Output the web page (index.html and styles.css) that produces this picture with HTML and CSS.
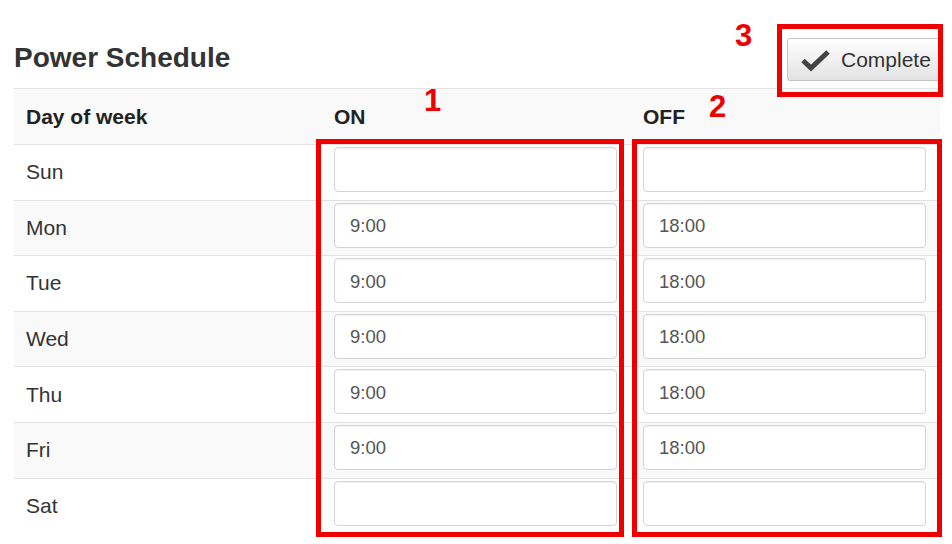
FILE: index.html
```html
<!DOCTYPE html>
<html>
<head>
<meta charset="utf-8">
<link rel="stylesheet" href="styles.css">
</head>
<body>
<div class="page">
  <div class="topbar">
    <h1 class="title">Power Schedule</h1>
    <button class="btn-complete" type="button">
      <svg class="check" width="32" height="24" viewBox="0 0 32 24"><path d="M3 12.5 L11 20 L28 4" fill="none" stroke="#444" stroke-width="5" stroke-linejoin="miter"/></svg>
      <span>Complete</span>
    </button>
  </div>
  <table class="schedule">
    <thead>
      <tr><th class="c-day">Day of week</th><th class="c-on">ON</th><th class="c-off">OFF</th></tr>
    </thead>
    <tbody>
      <tr><td>Sun</td><td><input class="time" value=""></td><td><input class="time" value=""></td></tr>
      <tr><td>Mon</td><td><input class="time" value="9:00"></td><td><input class="time" value="18:00"></td></tr>
      <tr><td>Tue</td><td><input class="time" value="9:00"></td><td><input class="time" value="18:00"></td></tr>
      <tr><td>Wed</td><td><input class="time" value="9:00"></td><td><input class="time" value="18:00"></td></tr>
      <tr><td>Thu</td><td><input class="time" value="9:00"></td><td><input class="time" value="18:00"></td></tr>
      <tr><td>Fri</td><td><input class="time" value="9:00"></td><td><input class="time" value="18:00"></td></tr>
      <tr><td>Sat</td><td><input class="time" value=""></td><td><input class="time" value=""></td></tr>
    </tbody>
  </table>

  <div class="mark box1"></div>
  <div class="mark box2"></div>
  <div class="mark box3"></div>
  <div class="num n1">1</div>
  <div class="num n2">2</div>
  <div class="num n3">3</div>
</div>
</body>
</html>
```

FILE: styles.css
```css
html, body {
  margin: 0;
  padding: 0;
  background: #fff;
}
body {
  font-family: "Liberation Sans", Arial, sans-serif;
  color: #333;
  width: 952px;
  height: 544px;
  overflow: hidden;
}
.page {
  position: relative;
  padding: 0 12px 0 14px;
}
.topbar {
  height: 88px;
  display: flex;
  align-items: flex-start;
  justify-content: space-between;
}
.title {
  margin: 42px 0 0 0;
  font-size: 28px;
  font-weight: bold;
  line-height: 32px;
  color: #333;
}
.btn-complete {
  margin-top: 38px;
  width: 153px;
  height: 43px;
  display: flex;
  align-items: center;
  padding: 0 0 0 12px;
  gap: 9px;
  border: 1px solid #c4c4c4;
  border-radius: 3px;
  background: linear-gradient(#ffffff, #e2e2e2);
  font-family: "Liberation Sans", Arial, sans-serif;
  font-size: 21px;
  color: #333;
  white-space: nowrap;
  overflow: hidden;
}
.check { display: block; flex: none; }
.schedule {
  width: 926px;
  border-collapse: collapse;
  table-layout: fixed;
  border-top: 1px solid #e2e2e2;
}
.schedule th, .schedule td {
  text-align: left;
  padding: 0 14px 0 12px;
  border-bottom: 1px solid #e2e2e2;
}
.schedule th {
  height: 55px;
  font-size: 21px;
  font-weight: bold;
  color: #222;
  background: #f9f9f9;
  vertical-align: middle;
}
.c-day { width: 282px; }
.c-on { width: 283px; }
.schedule td {
  height: 55.6px;
  font-size: 21px;
  color: #333;
  vertical-align: top;
  padding-top: 2px;
  padding-bottom: 0;
  box-sizing: border-box;
}
.schedule td:first-child {
  vertical-align: middle;
  padding-top: 0;
}
.schedule tbody tr:nth-child(even) td {
  background: #f9f9f9;
}
.schedule tbody tr:last-child td {
  border-bottom: none;
}
.time {
  display: block;
  width: 100%;
  height: 45px;
  box-sizing: border-box;
  border: 1px solid #d4d4d4;
  border-radius: 4px;
  background: #fff;
  padding: 2px 15px 0;
  font-family: "Liberation Sans", Arial, sans-serif;
  font-size: 18.5px;
  color: #555;
  box-shadow: inset 0 1px 1px rgba(0,0,0,0.05);
}
.mark {
  position: absolute;
  border: 5px solid #ee0000;
  box-sizing: border-box;
}
.box1 { left: 316px; top: 139px; width: 308px; height: 398px; }
.box2 { left: 632px; top: 139px; width: 310px; height: 398px; }
.box3 { left: 777px; top: 24px; width: 166px; height: 73px; }
.num {
  position: absolute;
  color: #ee0000;
  font-weight: bold;
  font-size: 31px;
  line-height: 31px;
}
.n1 { left: 424px; top: 85px; }
.n2 { left: 709px; top: 91px; }
.n3 { left: 735px; top: 20px; }
```
